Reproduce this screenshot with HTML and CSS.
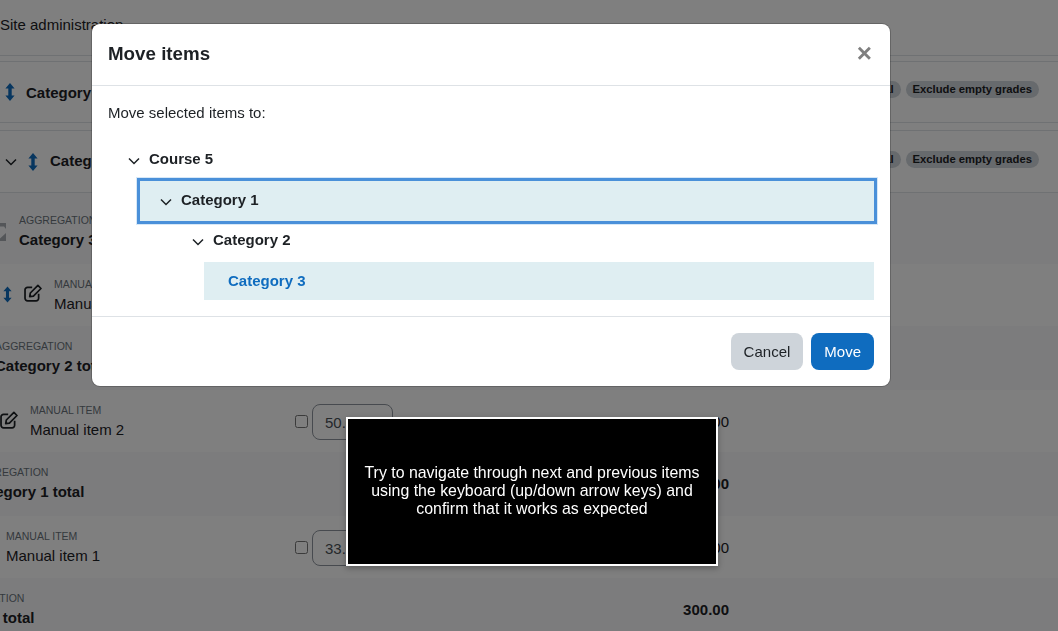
FILE: index.html
```html
<!DOCTYPE html>
<html lang="en">
<head>
<meta charset="utf-8">
<title>Move items</title>
<link rel="stylesheet" href="styles.css">
</head>
<body>
<svg class="defs" width="0" height="0" aria-hidden="true">
  <symbol id="updown" viewBox="0 0 10 18"><path d="M5 0 9.6 5.4H6.7V12.6H9.6L5 18 .4 12.6H3.3V5.4H.4Z"/></symbol>
  <symbol id="chev" viewBox="0 0 12 8"><path d="M1 1.5 6 6.5 11 1.5" fill="none" stroke="currentColor" stroke-width="1.5"/></symbol>
  <symbol id="pen" viewBox="0 0 17.6 17.6"><path d="M8 3.2H3.5A2.5 2.5 0 0 0 1 5.7V14a2.5 2.5 0 0 0 2.5 2.5h8.3a2.5 2.5 0 0 0 2.5-2.5V9.6" fill="none" stroke="currentColor" stroke-width="1.7"/><path d="M13.6 1.4 16.6 4.4 9.2 11.8 5.6 12.4 6.2 8.8Z" fill="none" stroke="currentColor" stroke-width="1.7" stroke-linejoin="round"/></symbol>
</svg>
<div class="page">
  <div class="topbar">Site administration</div>
  <div class="rule"></div>
  <div class="row cat cat-one">
    <svg class="updown"><use href="#updown"/></svg>
    <span class="cat-name">Category</span>
    <div class="pills"><span class="pill">Natural</span><span class="pill">Exclude empty grades</span></div>
  </div>
  <div class="rule rule-gap"></div>
  <div class="row cat cat-two">
    <svg class="chev"><use href="#chev"/></svg>
    <svg class="updown"><use href="#updown"/></svg>
    <span class="cat-name">Category 2</span>
    <div class="pills"><span class="pill">Natural</span><span class="pill">Exclude empty grades</span></div>
  </div>

  <div class="row item alt h-71 lv-19">
    <div class="lead">
      <svg class="sigma" viewBox="0 0 6 18"><path d="M0 0H6V6L4 3.5H0ZM6 10V18H0V15.5Z"/></svg>
      <div><div class="kind">AGGREGATION</div><div class="name bold">Category 3 total</div></div>
    </div>
  </div>
  <div class="row item h-62 lv-54">
    <div class="lead">
      <svg class="updown small"><use href="#updown"/></svg>
      <svg class="pen"><use href="#pen"/></svg>
      <div><div class="kind">MANUAL ITEM</div><div class="name">Manual item 3</div></div>
    </div>
  </div>
  <div class="row item alt h-64 lv-n3">
    <div class="lead"><div><div class="kind">AGGREGATION</div><div class="name bold">Category 2 total</div></div></div>
  </div>
  <div class="row item h-62 lv-30">
    <div class="lead">
      <svg class="pen"><use href="#pen"/></svg>
      <div><div class="kind">MANUAL ITEM</div><div class="name">Manual item 2</div></div>
    </div>
    <div class="grade"><span class="check"></span><span class="input">50.00</span></div>
    <div class="value plain">100.00</div>
  </div>
  <div class="row item alt h-64 lv-n27">
    <div class="lead"><div><div class="kind">AGGREGATION</div><div class="name bold">Category 1 total</div></div></div>
    <div class="value bold">200.00</div>
  </div>
  <div class="row item h-62 lv-6">
    <div class="lead"><div><div class="kind">MANUAL ITEM</div><div class="name">Manual item 1</div></div></div>
    <div class="grade"><span class="check"></span><span class="input">33.00</span></div>
    <div class="value plain">100.00</div>
  </div>
  <div class="row item alt h-64 lv-n51">
    <div class="lead"><div><div class="kind">AGGREGATION</div><div class="name bold">Course total</div></div></div>
    <div class="value bold">300.00</div>
  </div>
</div>

<div class="backdrop"></div>

<div class="modal">
  <div class="modal-head">
    <h2>Move items</h2>
    <span class="close">&times;</span>
  </div>
  <div class="modal-body">
    <p>Move selected items to:</p>
    <ul class="tree">
      <li class="node lvl-0"><svg class="chev"><use href="#chev"/></svg>Course 5</li>
      <li class="node lvl-1 focused"><svg class="chev"><use href="#chev"/></svg>Category 1</li>
      <li class="node lvl-2"><svg class="chev"><use href="#chev"/></svg>Category 2</li>
      <li class="node lvl-3 current">Category 3</li>
    </ul>
  </div>
  <div class="modal-foot">
    <button class="btn cancel">Cancel</button>
    <button class="btn move">Move</button>
  </div>
</div>

<div class="note">Try to navigate through next and previous items using the keyboard (up/down arrow keys) and confirm that it works as expected</div>
</body>
</html>
```
FILE: styles.css
```css
* { box-sizing: border-box; }
html, body { margin: 0; height: 100%; overflow: hidden; }
body { font: 15px/1.5 "Liberation Sans", Arial, sans-serif; color: #1d2125; background: #fff; position: relative; }
.defs { position: absolute; }
.page { height: 631px; overflow: hidden; }
.topbar { height: 55px; padding-top: 14px; font-size: 15px; }
.rule { height: 7px; border-top: 1px solid #dee2e6; border-bottom: 1px solid #dee2e6; }
.rule-gap { height: 9px; }
.row { display: flex; align-items: center; }
.cat-one { height: 60px; padding: 2px 0 0 5px; }
.cat-two { height: 62px; padding-left: 5px; border-bottom: 1px solid #dee2e6; }
.cat-one .updown { margin-bottom: 2px; }
.cat-one .cat-name { margin-left: 11px; }
.cat-two .chev { margin-right: 11px; }
.cat-two .cat-name { margin-left: 12px; }
.cat-name { font-weight: 700; }
.updown { width: 10px; height: 18px; fill: #0f6cbf; flex: none; }
.updown.small { width: 9px; height: 17px; margin-right: 12px; }
.chev { width: 12px; height: 8px; color: #1d2125; flex: none; }
.pills { margin-left: auto; padding-right: 19px; display: flex; gap: 5px; }
.cat-one .pills { margin-bottom: 7px; }
.cat-two .pills { margin-bottom: 4px; }
.pill { background: #ced4da; border-radius: 9px; font-size: 11.25px; font-weight: 700; line-height: 17px; padding: 0 7px; }
.item { padding-right: 329px; }
.alt { background: #f8f9fa; }
.h-71 { height: 71px; padding-top: 7px; }
.h-62 { height: 62px; }
.h-62 .lead { margin-top: 2px; }
.h-64 { height: 64px; }
.lead { width: 295px; flex: none; display: flex; align-items: center; white-space: nowrap; }
.lv-19 .sigma { width: 6px; height: 18px; fill: #a8adb3; margin-right: 13px; flex: none; }
.lv-54 .lead { padding-left: 3px; }
.lv-54 .pen { margin: 0 12px 6px 0; }
.lv-54 .updown { margin-bottom: 4px; }
.lv-n3 .lead { margin-left: -5px; width: 300px; }
.lv-30 .lead .pen { margin: 0 12px 4px 0; }
.lv-n27 .lead { margin-left: -29px; width: 324px; }
.lv-6 .lead { padding-left: 6px; }
.lv-n51 .lead { margin-left: -53px; width: 348px; }
.pen { width: 18px; height: 18px; color: #1d2125; flex: none; }
.kind { font-size: 10.5px; line-height: 14px; color: #6a737b; }
.name { line-height: 22px; margin-top: 2px; }
.bold { font-weight: 700; }
.grade { display: flex; align-items: center; gap: 4px; margin-top: 1px; }
.check { width: 13px; height: 13px; border: 1px solid #767676; border-radius: 2.5px; background: #fff; }
.input { width: 81px; height: 36px; border: 1px solid #8f959e; border-radius: 8px; padding: 0 12px; line-height: 36px; color: #495057; background: #fff; }
.value { margin-left: auto; }
.plain { margin-top: 2px; }
.backdrop { position: fixed; inset: 0; background: rgba(0, 0, 0, .5); }
.modal { position: absolute; left: 92px; top: 24px; width: 798px; height: 362px; background: #fff; border-radius: 8px; display: flex; flex-direction: column; box-shadow: 0 0 0 1px rgba(0, 0, 0, .2); }
.modal-head { height: 62px; flex: none; display: flex; align-items: center; justify-content: space-between; padding: 0 16px; border-bottom: 1px solid #dee2e6; }
.modal-head h2 { margin: 0; font-size: 18.75px; font-weight: 700; line-height: 1.2; }
.close { font-size: 26px; line-height: 1; font-weight: 700; color: #7f7f7f; margin: -4px 2px 0 0; }
.modal-body { flex: 1; padding: 16px; }
.modal-body p { margin: 0; line-height: 22px; }
.tree { list-style: none; margin: 16px 0 0; padding: 0; }
.node { display: flex; align-items: center; font-weight: 700; }
.node .chev { margin-right: 9px; margin-top: 3px; }
.lvl-0 { height: 38px; padding-left: 20px; }
.lvl-1 { height: 46px; margin: 0 -3px 0 29px; padding: 0 0 2px 20px; background: #dfeef2; border: 3px solid #4a90d9; box-shadow: 0 0 0 1px #d7e8f7; }
.lvl-2 { height: 38px; padding: 0 0 6px 84px; }
.lvl-3 { height: 38px; margin-left: 96px; padding-left: 24px; background: #dfeef2; color: #0f6cbf; }
.modal-foot { height: 70px; flex: none; display: flex; justify-content: flex-end; align-items: center; gap: 8px; padding: 0 16px; border-top: 1px solid #dee2e6; }
.btn { height: 37px; border: 0; border-radius: 8px; font: 15px "Liberation Sans", Arial, sans-serif; padding: 0 13px; }
.cancel { background: #ced4da; color: #1d2125; }
.move { background: #0f6cbf; color: #fff; }
.note { position: absolute; left: 346px; top: 417px; width: 372px; height: 149px; background: #000; color: #fff; border: 2px solid #fff; font-size: 15.9px; line-height: 18px; padding: 0 12px 2px; text-align: center; display: flex; align-items: center; justify-content: center; box-shadow: 0 2px 6px rgba(0, 0, 0, .3); }
```
